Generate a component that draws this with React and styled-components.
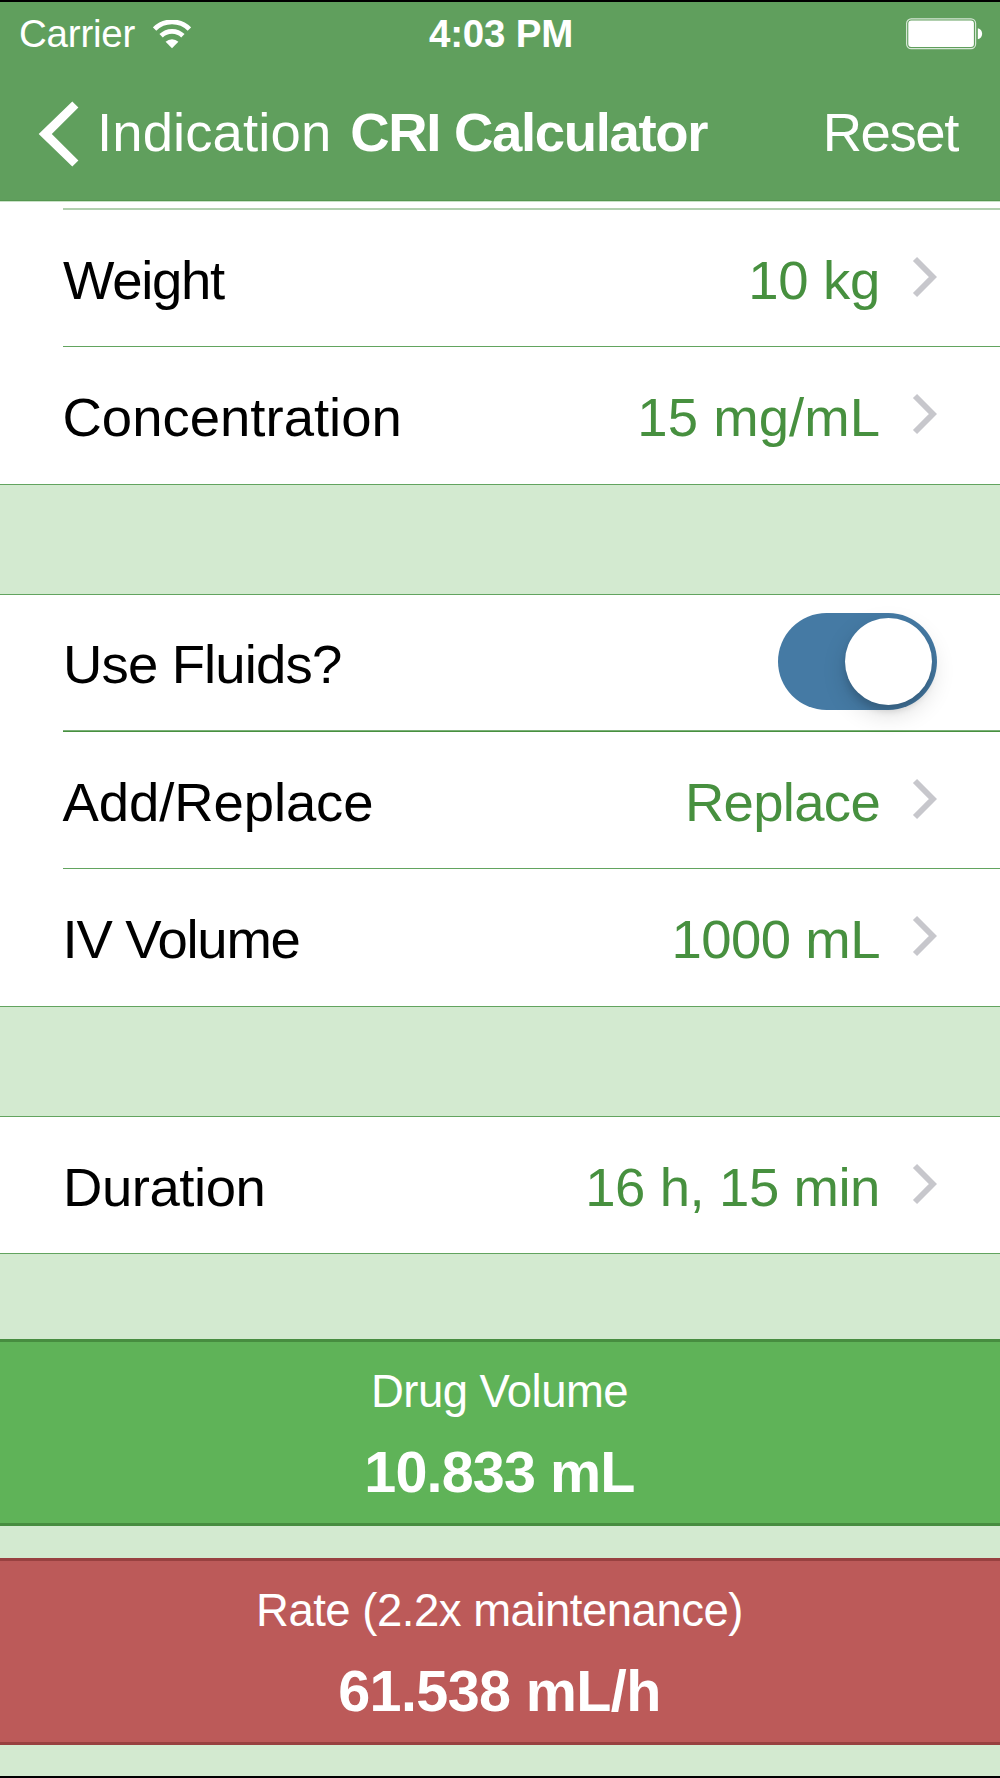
import React from "react";
import styled, { createGlobalStyle } from "styled-components";

const GlobalStyle = createGlobalStyle`
  *, *::before, *::after { box-sizing: border-box; }
  body { margin: 0; background: #000; }
`;

const Screen = styled.div`
  width: 1000px;
  height: 1778px;
  padding: 2px 0;
  display: flex;
  flex-direction: column;
  background: #000;
  font-family: "Liberation Sans", Arial, Helvetica, sans-serif;
  overflow: hidden;
`;

const Text = styled.span`
  font-size: ${(p) => p.$size}px;
  font-weight: ${(p) => (p.$bold ? 700 : 400)};
  letter-spacing: ${(p) => p.$track || 0}px;
  color: ${(p) => p.$color || "#fff"};
  margin-left: ${(p) => p.$indent || 0}px;
  line-height: 1.2;
  white-space: nowrap;
`;

const Header = styled.header`
  height: 199px;
  flex: none;
  background: #609f5d;
  border-bottom: 1px solid #559650;
  color: #fff;
`;

const StatusBar = styled.div`
  height: 64px;
  padding: 0 17px 0 19px;
  display: grid;
  grid-template-columns: 1fr auto 1fr;
  align-items: center;
`;

const StatusSide = styled.div`
  display: flex;
  align-items: center;
  gap: 18px;
  justify-content: ${(p) => (p.$end ? "flex-end" : "flex-start")};
`;

const NavBar = styled.div`
  height: 134px;
  padding: 0 42px 0 38px;
  display: flex;
  align-items: center;
`;

const BackIcon = styled.svg`
  width: 41px;
  height: 66px;
  flex: none;
  margin-top: 1px;
`;

const NavAction = styled.div`
  margin-left: auto;
  display: flex;
`;

const Body = styled.main`
  flex: 1;
  background: #d3ead0;
`;

const Section = styled.section`
  background: #fff;
  border-top: 1px solid ${(p) => p.$top || "#62a45f"};
  border-bottom: 1px solid #62a45f;
  padding-left: 63px;
  margin-bottom: ${(p) => p.$gap}px;
`;

const PreviousRowEdge = styled.div`
  height: 8px;
  border-bottom: 2px solid #b1d0af;
`;

const Row = styled.div`
  height: ${(p) => p.$height}px;
  padding-right: 63px;
  display: flex;
  align-items: center;
  justify-content: space-between;
`;

const Divider = styled.div`
  height: ${(p) => (p.$strong ? 2 : 1)}px;
  background: ${(p) => (p.$strong ? "#47903f" : "#62a45f")};
  border-top: ${(p) => (p.$strong ? "1px solid #7bb078" : "none")};
`;

const RowLabel = styled.div`
  display: flex;
  padding-top: 5px;
  margin-left: -1px;
`;

const RowValue = styled.div`
  display: flex;
  align-items: center;
  gap: 32px;
`;

const ValueText = styled.div`
  display: flex;
  padding-top: 5px;
`;

const ChevronIcon = styled.svg`
  width: 25px;
  height: 42px;
  margin-top: -2px;
`;

const Switch = styled.div`
  width: 159px;
  height: 97px;
  padding: 5px;
  margin-top: -3px;
  border-radius: 49px;
  background: #457aa4;
  display: flex;
  justify-content: flex-end;
`;

const Knob = styled.div`
  width: 87px;
  height: 87px;
  border-radius: 50%;
  background: #fff;
  box-shadow: 0 9px 24px rgba(0, 0, 0, 0.14), 0 6px 7px rgba(0, 0, 0, 0.13);
`;

const Result = styled.section`
  height: ${(p) => p.$height}px;
  margin-bottom: ${(p) => p.$gap}px;
  padding: 23px 1px 0 0;
  display: flex;
  flex-direction: column;
  align-items: center;
  gap: 18px;
  background: ${(p) => p.$fill};
  border-top: 3px solid ${(p) => p.$edge};
  border-bottom: 3px solid ${(p) => p.$edge};
`;

const LABEL_SIZE = 54.5;
const VALUE_GREEN = "#47903f";

const Chevron = () => (
  <ChevronIcon viewBox="0 0 25 42" aria-hidden="true">
    <path d="M3 3 L20.9 21 L3 39" fill="none" stroke="#c7c7cc" strokeWidth="5.8" />
  </ChevronIcon>
);

const Wifi = () => (
  <svg width="38" height="29" viewBox="0 0 38 29" aria-hidden="true">
    <g fill="none" stroke="#fff" strokeWidth="4.8">
      <path d="M1.6 9 A24.8 24.8 0 0 1 36.4 9" />
      <path d="M8.1 15.8 A15.6 15.6 0 0 1 29.9 15.8" />
    </g>
    <path d="M19 28.2 L12.6 21.8 A9.2 9.2 0 0 1 25.4 21.8 Z" fill="#fff" />
  </svg>
);

const Battery = () => (
  <svg width="77" height="32" viewBox="0 0 77 32" aria-hidden="true">
    <rect x="0.6" y="0.9" width="69" height="29.8" rx="4.6" fill="none" stroke="#fff" strokeOpacity="0.75" strokeWidth="1.2" />
    <rect x="2.3" y="2.4" width="65.6" height="26.6" rx="3" fill="#fff" />
    <path d="M71.8 10.3 C77.6 11.2 77.6 20.4 71.8 21.3 Z" fill="#fff" />
  </svg>
);

const NavRow = ({ height, label, labelTrack, indent, value, valueTrack }) => (
  <Row $height={height}>
    <RowLabel>
      <Text $size={LABEL_SIZE} $color="#000" $track={labelTrack} $indent={indent}>{label}</Text>
    </RowLabel>
    <RowValue>
      <ValueText>
        <Text $size={LABEL_SIZE} $color={VALUE_GREEN} $track={valueTrack}>{value}</Text>
      </ValueText>
      <Chevron />
    </RowValue>
  </Row>
);

export default function App() {
  return (
    <Screen>
      <GlobalStyle />
      <Header>
        <StatusBar>
          <StatusSide>
            <Text $size={38.5} $track={-0.22}>Carrier</Text>
            <Wifi />
          </StatusSide>
          <Text $size={38.5} $bold $track={-0.22}>4:03 PM</Text>
          <StatusSide $end>
            <Battery />
          </StatusSide>
        </StatusBar>
        <NavBar>
          <BackIcon viewBox="0 0 41 66" aria-hidden="true">
            <path d="M34.3 0.5 L40.4 6.6 L13.8 33 L40.4 59.4 L34.3 65.5 L0.7 33 Z" fill="#fff" />
          </BackIcon>
          <Text $size={LABEL_SIZE} $track={0.1} $indent={18}>Indication</Text>
          <Text $size={LABEL_SIZE} $bold $track={-1.34} $indent={19}>CRI Calculator</Text>
          <NavAction>
            <Text $size={LABEL_SIZE} $track={-1.4}>Reset</Text>
          </NavAction>
        </NavBar>
      </Header>

      <Body>
        <Section $top="#c9e2c7" $gap={109}>
          <PreviousRowEdge />
          <NavRow height={136} label="Weight" labelTrack={-1.3} indent={1} value="10 kg" valueTrack={-0.3} />
          <Divider />
          <NavRow height={137} label="Concentration" labelTrack={0} indent={0.5} value="15 mg/mL" valueTrack={0.05} />
        </Section>

        <Section $gap={109}>
          <Row $height={135}>
            <RowLabel>
              <Text $size={LABEL_SIZE} $color="#000" $track={-0.85} $indent={1}>Use Fluids?</Text>
            </RowLabel>
            <Switch role="switch" aria-checked="true">
              <Knob />
            </Switch>
          </Row>
          <Divider $strong />
          <NavRow height={136} label="Add/Replace" labelTrack={-0.1} indent={0.5} value="Replace" valueTrack={-0.7} />
          <Divider />
          <NavRow height={137} label="IV Volume" labelTrack={-1.26} indent={0.5} value="1000 mL" valueTrack={-0.5} />
        </Section>

        <Section $gap={85}>
          <NavRow height={136} label="Duration" labelTrack={-0.45} indent={1} value="16 h, 15 min" valueTrack={-0.43} />
        </Section>

        <Result $height={187} $gap={32} $fill="#5fb358" $edge="#478d40">
          <Text $size={45.5} $track={-0.54}>Drug Volume</Text>
          <Text $size={57.5} $bold $track={-0.87}>10.833 mL</Text>
        </Result>
        <Result $height={187} $gap={0} $fill="#bc5a59" $edge="#984140">
          <Text $size={45.5} $track={-0.49}>Rate (2.2x maintenance)</Text>
          <Text $size={57.5} $bold $track={-0.61}>61.538 mL/h</Text>
        </Result>
      </Body>
    </Screen>
  );
}
